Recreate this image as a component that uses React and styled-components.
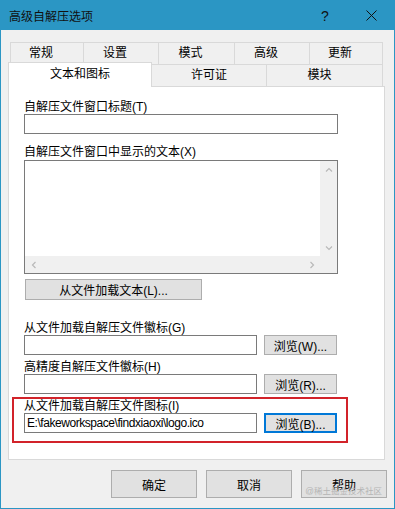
import React from 'react';
import styled, { createGlobalStyle } from 'styled-components';

// Global

const GlobalStyle = createGlobalStyle`
  html, body {
    margin: 0;
    padding: 0;
    background: #f0f0f0;
  }
  body {
    font-family: "Liberation Sans", "Noto Sans CJK SC", sans-serif;
    font-size: 12px;
    color: #000;
  }
`;

// Window frame

const StyledWindow = styled.div`
  position: relative;
  box-sizing: border-box;
  width: 395px;
  height: 509px;
  border: 1px solid #2b96c4;
  background: #f0f0f0;
  display: flex;
  flex-direction: column;
`;

const StyledTitleBar = styled.header`
  display: flex;
  align-items: center;
  height: 29px;
  background: #2b96c4;
  padding-left: 8px;
`;

const StyledTitle = styled.h1`
  flex: 1;
  margin: 0;
  font-size: 12px;
  font-weight: 400;
  color: #111;
`;

const StyledCaptionButton = styled.span`
  display: flex;
  align-items: center;
  justify-content: center;
  width: 46px;
  height: 29px;
  color: #111;
  font-size: 14px;
`;

const StyledBody = styled.main`
  padding: 12px 9px 0 7px;
`;

// Tabs

const StyledTabRow = styled.div`
  display: grid;
  grid-template-columns: ${(props) => props.$cols};
  height: 22px;
  margin-left: ${(props) => props.$indent}px;
`;

const StyledTab = styled.div`
  box-sizing: border-box;
  height: 22px;
  border-top: 1px solid #d9d9d9;
  border-right: 1px solid #d9d9d9;
  background: #f0f0f0;
  text-align: center;
  line-height: 21px;
  padding-right: ${(props) => props.$shift || 0}px;
  &:first-child {
    border-left: 1px solid #d9d9d9;
  }
`;

const StyledActiveTab = styled.div`
  position: relative;
  z-index: 1;
  align-self: start;
  box-sizing: border-box;
  height: 25px;
  margin-top: -2px;
  border: 1px solid #d9d9d9;
  border-bottom: none;
  background: #fff;
  text-align: center;
  line-height: 14px;
  padding-top: 4px;
`;

// Panel content

const StyledPanel = styled.section`
  box-sizing: border-box;
  height: 374px;
  background: #fff;
  border: 1px solid #d9d9d9;
  padding: 13px 0 0 15px;
  display: flex;
  flex-direction: column;
  align-items: flex-start;
`;

const StyledLabel = styled.label`
  display: block;
  line-height: 14px;
  white-space: nowrap;
  margin-top: ${(props) => props.$top || 0}px;
  margin-bottom: ${(props) => props.$bottom || 0}px;
`;

const StyledInput = styled.input`
  box-sizing: border-box;
  width: ${(props) => props.$w}px;
  height: 20px;
  margin: 0;
  padding: 0 2px;
  border: 1px solid #7a7a7a;
  background: #fff;
  font: inherit;
  font-size: 12px;
  letter-spacing: -0.45px;
  color: #000;
  outline: none;
`;

const StyledTextArea = styled.div`
  box-sizing: border-box;
  width: 314px;
  height: 114px;
  border: 1px solid #7a7a7a;
  display: grid;
  grid-template-columns: 1fr 17px;
  grid-template-rows: 1fr 17px;
`;

const StyledTextContent = styled.div`
  background: #fff;
`;

const StyledScrollBar = styled.div`
  display: flex;
  flex-direction: ${(props) => (props.$vertical ? 'column' : 'row')};
  justify-content: space-between;
  background: #f0f0f0;
`;

const StyledScrollCorner = styled.div`
  background: #f0f0f0;
`;

const StyledArrowCell = styled.span`
  display: flex;
  align-items: center;
  justify-content: center;
  width: 17px;
  height: 17px;
`;

const StyledButton = styled.button`
  box-sizing: border-box;
  width: ${(props) => props.$w}px;
  height: ${(props) => props.$h}px;
  margin: ${(props) => props.$margin || '0'};
  padding: 0;
  background: #e1e1e1;
  border: ${(props) => (props.$focused ? '2px solid #0078d7' : '1px solid #adadad')};
  font: inherit;
  font-size: 12px;
  color: #000;
  white-space: nowrap;
`;

const StyledRow = styled.div`
  display: flex;
  gap: 7px;
`;

const StyledHighlight = styled.div`
  margin: 3px 0 0 -12px;
  padding: 0 9px 8px 10px;
  border: 2px solid #d2232a;
`;

// Footer

const StyledFooter = styled.footer`
  display: flex;
  justify-content: flex-end;
  gap: 9px;
  padding: 10px 7px 0 0;
`;

const StyledWatermark = styled.span`
  position: absolute;
  right: 12px;
  bottom: 12px;
  font-size: 8.5px;
  color: #b5b5b5;
  white-space: nowrap;
`;

const chevrons = {
  up: 'M1 5.5 L4 2.5 L7 5.5',
  down: 'M1 2.5 L4 5.5 L7 2.5',
  left: 'M5.5 1 L2.5 4 L5.5 7',
  right: 'M2.5 1 L5.5 4 L2.5 7',
};

function Arrow({ dir }) {
  return (
    <StyledArrowCell>
      <svg width="8" height="8" viewBox="0 0 8 8">
        <path d={chevrons[dir]} fill="none" stroke="#b9b9b9" strokeWidth="1.2" />
      </svg>
    </StyledArrowCell>
  );
}

function FileField({ label, top, button, value, highlight }) {
  return (
    <>
      <StyledLabel $top={top}>{label}</StyledLabel>
      <StyledRow>
        <StyledInput $w={233} readOnly value={value || ''} />
        <StyledButton $w={73} $h={20} $focused={highlight}>
          {button}
        </StyledButton>
      </StyledRow>
    </>
  );
}

function App() {
  return (
    <>
      <GlobalStyle />
      <StyledWindow>
        <StyledTitleBar>
          <StyledTitle>高级自解压选项</StyledTitle>
          <StyledCaptionButton>?</StyledCaptionButton>
          <StyledCaptionButton>
            <svg width="11" height="11" viewBox="0 0 11 11">
              <path d="M0.5 0.5 L10.5 10.5 M10.5 0.5 L0.5 10.5" stroke="#111" strokeWidth="1" />
            </svg>
          </StyledCaptionButton>
        </StyledTitleBar>

        <StyledBody>
          <StyledTabRow $cols="74px 75px 76px 75px 73px" $indent={2}>
            {['常规', '设置', '模式', '高级', '更新'].map((t) => (
              <StyledTab key={t} $shift={12}>
                {t}
              </StyledTab>
            ))}
          </StyledTabRow>
          <StyledTabRow $cols="144px 115px 116px" $indent={0}>
            <StyledActiveTab>文本和图标</StyledActiveTab>
            <StyledTab>许可证</StyledTab>
            <StyledTab $shift={10}>模块</StyledTab>
          </StyledTabRow>

          <StyledPanel>
            <StyledLabel>自解压文件窗口标题(T)</StyledLabel>
            <StyledInput $w={314} readOnly value="" />

            <StyledLabel $top={11} $bottom={1}>
              自解压文件窗口中显示的文本(X)
            </StyledLabel>
            <StyledTextArea>
              <StyledTextContent />
              <StyledScrollBar $vertical>
                <Arrow dir="up" />
                <Arrow dir="down" />
              </StyledScrollBar>
              <StyledScrollBar>
                <Arrow dir="left" />
                <Arrow dir="right" />
              </StyledScrollBar>
              <StyledScrollCorner />
            </StyledTextArea>
            <StyledButton $w={177} $h={21} $margin="5px 0 0 1px">
              从文件加载文本(L)...
            </StyledButton>

            <FileField label="从文件加载自解压文件徽标(G)" top={21} button="浏览(W)..." />
            <FileField label="高精度自解压文件徽标(H)" top={5} button="浏览(R)..." />

            <StyledHighlight>
              <FileField
                label="从文件加载自解压文件图标(I)"
                top={0}
                button="浏览(B)..."
                value="E:\fakeworkspace\findxiaoxi\logo.ico"
                highlight
              />
            </StyledHighlight>
          </StyledPanel>
        </StyledBody>

        <StyledFooter>
          <StyledButton $w={86} $h={28}>确定</StyledButton>
          <StyledButton $w={86} $h={28}>取消</StyledButton>
          <StyledButton $w={86} $h={28}>帮助</StyledButton>
        </StyledFooter>
        <StyledWatermark>@稀土掘金技术社区</StyledWatermark>
      </StyledWindow>
    </>
  );
}

export default App;
